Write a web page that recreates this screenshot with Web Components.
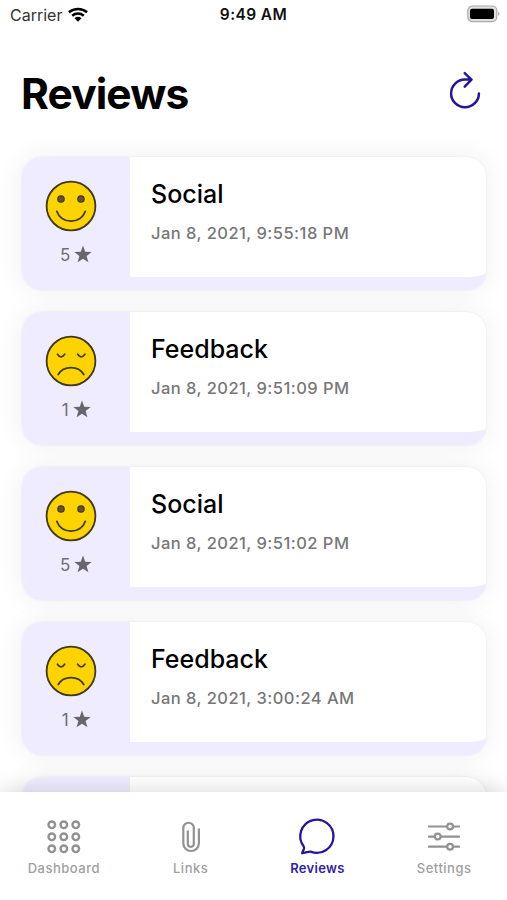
<!DOCTYPE html>
<html lang="en">
<head>
<meta charset="utf-8">
<title>Reviews</title>
<style>
    html, body {
        margin: 0;
        height: 100%;
        overflow: hidden;
        background: #fff;
        font-family: Inter, "Liberation Sans", sans-serif;
    }
</style>
</head>
<body>
<rv-app>
    <rv-status-bar slot="status" carrier="Carrier" time="9:49 AM"></rv-status-bar>
    <rv-header slot="header">Reviews</rv-header>
    <rv-card stars="5"><span slot="title">Social</span>Jan 8, 2021, 9:55:18 PM</rv-card>
    <rv-card stars="1"><span slot="title">Feedback</span>Jan 8, 2021, 9:51:09 PM</rv-card>
    <rv-card stars="5"><span slot="title">Social</span>Jan 8, 2021, 9:51:02 PM</rv-card>
    <rv-card stars="1"><span slot="title">Feedback</span>Jan 8, 2021, 3:00:24 AM</rv-card>
    <rv-card></rv-card>
    <rv-tab slot="tabs" icon="grid">Dashboard</rv-tab>
    <rv-tab slot="tabs" icon="clip">Links</rv-tab>
    <rv-tab slot="tabs" icon="chat" active>Reviews</rv-tab>
    <rv-tab slot="tabs" icon="sliders">Settings</rv-tab>
</rv-app>
<script>
class App extends HTMLElement {
    constructor() {
        super();
        this.attachShadow({mode: 'open'});
        this.shadowRoot.innerHTML = `
            <style>
                :host {
                    display: flex;
                    flex-direction: column;
                    height: 100vh;
                }
                main {
                    flex: 1;
                    min-height: 0;
                    overflow: hidden;
                    display: flex;
                    flex-direction: column;
                    gap: 21.5px;
                    padding: 25.5px 21px 0 21.5px;
                }
                nav {
                    position: relative;
                    display: grid;
                    grid-template-columns: repeat(4, 1fr);
                    height: 108px;
                    background: #fff;
                    box-shadow: 0 0 22px rgba(0,0,0,0.16);
                }
            </style>
            <slot name="status"></slot>
            <slot name="header"></slot>
            <main><slot></slot></main>
            <nav><slot name="tabs"></slot></nav>
        `;
    }
}
customElements.define('rv-app', App);

class StatusBar extends HTMLElement {
    constructor() {
        super();
        this.attachShadow({mode: 'open'});
        this.shadowRoot.innerHTML = `
            <style>
                :host {
                    display: grid;
                    grid-template-columns: 1fr auto 1fr;
                    align-items: center;
                    height: 29px;
                    margin-bottom: 1px;
                    padding: 0 8px 0 10px;
                    box-sizing: border-box;
                    font-size: 16px;
                    color: #111;
                    flex: none;
                }
                #carrier {
                    display: flex;
                    align-items: center;
                    gap: 6px;
                    color: #333;
                }
                #time {
                    font-weight: 600;
                    font-size: 15.5px;
                    letter-spacing: 0.4px;
                    margin-right: 2px;
                }
                #battery {
                    justify-self: end;
                    margin: -2px -1px 0 0;
                }
                svg {
                    display: block;
                }
            </style>
            <div id="carrier">
                <span>${this.getAttribute('carrier')}</span>
                <svg width="20" height="15" viewBox="0.5 0 20 15" fill="none" stroke="#000" stroke-width="2.5">
                    <path d="M1.4 5.3a14 14 0 0 1 18.2 0M4.7 8.7a9 9 0 0 1 11.6 0"/>
                    <path d="M7 11.3a5.5 5.5 0 0 1 7 0L10.5 14.8Z" fill="#000" stroke="none"/>
                </svg>
            </div>
            <div id="time">${this.getAttribute('time')}</div>
            <svg id="battery" width="33" height="18" viewBox="0 0 33 18">
                <rect x="0.8" y="1" width="29" height="15.6" rx="4.5" fill="#e0e0e0" stroke="#aaa" stroke-width="1.2"/>
                <rect x="3" y="3.8" width="24" height="10.2" rx="2" fill="#000"/>
                <path d="M31.2 6.8q1.3.4 1.3 2t-1.3 2z" fill="#aaa"/>
            </svg>
        `;
    }
}
customElements.define('rv-status-bar', StatusBar);

class Header extends HTMLElement {
    constructor() {
        super();
        this.attachShadow({mode: 'open'});
        this.shadowRoot.innerHTML = `
            <style>
                :host {
                    display: flex;
                    justify-content: space-between;
                    align-items: center;
                    height: 101px;
                    padding: 26px 25px 0 21px;
                    box-sizing: border-box;
                    flex: none;
                }
                h1 {
                    margin: 0;
                    font-size: 42.5px;
                    line-height: 52px;
                    font-weight: 700;
                    letter-spacing: -0.9px;
                    color: #000;
                }
                svg {
                    margin-top: -7px;
                }
            </style>
            <h1><slot></slot></h1>
            <svg width="36" height="42" viewBox="0 0 36 42" fill="none" stroke="#2316a0" stroke-width="2.5" stroke-linecap="round" stroke-linejoin="round">
                <path d="M32.9 24.4A13.9 13.9 0 1 1 19 10.5H25.500M18.700 4.200l6.800 6.400-6.800 7.100"/>
            </svg>
        `;
    }
}
customElements.define('rv-header', Header);

const faces = {
    happy: `
        <g fill="#69502c" stroke="#40391f" stroke-width="1.2">
            <circle cx="16" cy="19" r="3.2"/>
            <circle cx="36" cy="19" r="3.2"/>
        </g>
        <path d="M11.800 31.300A14.800 13.500 0 0 0 40.300 31.300"/>
    `,
    sad: `
        <path d="M12.500 19.200q3.500 5.200 7.200 0M32.700 19.200q3.500 5.200 7.200 0"/>
        <path d="M13.200 39.500A14.500 13 0 0 1 38.800 39.500"/>
    `
};

class Card extends HTMLElement {
    constructor() {
        super();
        this.attachShadow({mode: 'open'});
        const stars = this.getAttribute('stars');
        this.shadowRoot.innerHTML = `
            <style>
                :host {
                    display: flex;
                    flex: none;
                    height: 133.5px;
                    box-sizing: border-box;
                    border-bottom: 13px solid #f0ecff;
                    border-radius: 20px 20px 18px 20px;
                    background: linear-gradient(90deg, #f0ecff 108.5px, #fff 108.5px);
                    box-shadow: 0 0 2px rgba(0,0,0,0.1), 0 0 28px rgba(0,0,0,0.065);
                }
                #rating {
                    width: 108.5px;
                    display: flex;
                    flex-direction: column;
                    align-items: center;
                    box-sizing: border-box;
                    padding: 23px 9px 0 0;
                }
                #rating svg {
                    display: block;
                }
                #stars {
                    display: flex;
                    align-items: center;
                    gap: 4px;
                    margin: 11px 0 0 10px;
                    font-size: 17px;
                    line-height: 24px;
                    color: #6f6d76;
                }
                #stars svg {
                    margin-top: -2px;
                }
                #body {
                    padding: 20px 0 0 21px;
                }
                h2 {
                    margin: 0;
                    font-size: 25px;
                    line-height: 34px;
                    font-weight: 500;
                    color: #000;
                }
                p {
                    margin: 11px 0 0;
                    font-size: 16.5px;
                    line-height: 22px;
                    font-weight: 500;
                    color: #777;
                    letter-spacing: 0.46px;
                }
            </style>
            <div id="rating">${stars ? `
                <svg width="52" height="52" viewBox="0 0 52 52" fill="none" stroke="#40391f" stroke-width="1.8" stroke-linecap="round">
                    <circle cx="26" cy="26" r="24.4" fill="#fdd400"/>
                    ${stars > 3 ? faces.happy : faces.sad}
                </svg>
                <div id="stars">
                    <span>${stars}</span>
                    <svg width="18" height="18" viewBox="0.5 0 17 17" fill="#68666c">
                        <path d="M9 .5l2.100 5.900 6.100.200-4.800 3.800 1.700 6L9 13l-5.100 3.400 1.700-6L.800 6.600l6.100-.2z"/>
                    </svg>
                </div>` : ''}
            </div>
            <div id="body">
                <h2><slot name="title"></slot></h2>
                <p><slot></slot></p>
            </div>
        `;
    }
}
customElements.define('rv-card', Card);

const dots = [6.8, 18.8, 30.8];
const icons = {
    grid: `<g stroke-width="2.4">${dots.map(y => dots.map(x => `<circle cx="${x}" cy="${y}" r="3.3"/>`).join('')).join('')}</g>`,
    clip: `<path d="M26.900 10.500V25.200a7.800 7.800 0 0 1-15.600 0V10a5.250 5.250 0 0 1 10.500 0V25.800a3 3 0 0 1-6 0V12.500" stroke-width="2.2"/>`,
    chat: `<path d="M4.600 28.200A16.600 16.600 0 1 1 11.600 33.600Q9.500 33.400 3.200 35.200Q3.800 33 4.900 31Q5.400 29.800 4.600 28.200Z" stroke-width="2.3" stroke-linejoin="round"/>`,
    sliders: `<path d="M2.100 8.500h19M27.100 8.500h6.800M2.100 18.600h6.600M14.700 18.600h19.200M2.100 28.700h19M27.100 28.700h6.800"/><g><circle cx="24.100" cy="8.500" r="2.900"/><circle cx="11.700" cy="18.600" r="2.900"/><circle cx="24.100" cy="28.700" r="2.900"/></g>`
};

class Tab extends HTMLElement {
    constructor() {
        super();
        this.attachShadow({mode: 'open'});
        this.shadowRoot.innerHTML = `
            <style>
                :host {
                    display: flex;
                    flex-direction: column;
                    align-items: center;
                    gap: 4px;
                    padding-top: 26px;
                    font-size: 13px;
                    line-height: 18px;
                    font-weight: 500;
                    letter-spacing: 0.5px;
                    color: #a0a0a0;
                }
                :host([active]) {
                    color: #2f22a8;
                    font-weight: 600;
                    letter-spacing: 0.3px;
                }
                span {
                    padding-left: 1px;
                }
                svg {
                    stroke: #929292;
                    overflow: visible;
                }
                :host([active]) svg {
                    stroke: #2316a0;
                }
            </style>
            <svg width="36" height="37" viewBox="0 0 36 37" fill="none" stroke-width="2.2">${icons[this.getAttribute('icon')]}</svg>
            <span><slot></slot></span>
        `;
    }
}
customElements.define('rv-tab', Tab);
</script>
</body>
</html>
